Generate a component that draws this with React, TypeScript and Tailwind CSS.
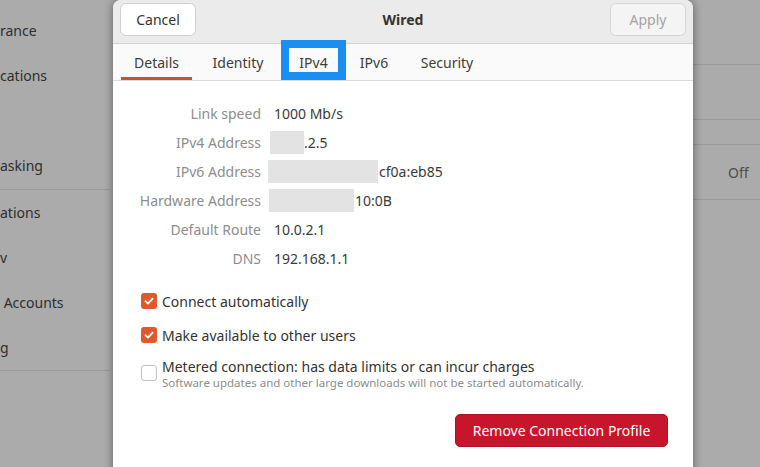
import React from "react";

function Check({ checked }: { checked: boolean }) {
  if (checked) {
    return (
      <div className="w-[16px] h-[16px] rounded-[3px] bg-[#e2582a] flex items-center justify-center shrink-0">
        <svg width="12" height="12" viewBox="0 0 12 12">
          <polyline points="2.5,6.2 5,8.6 9.6,3.6" fill="none" stroke="#ffffff" strokeWidth="1.8" strokeLinecap="round" strokeLinejoin="round" />
        </svg>
      </div>
    );
  }
  return <div className="w-[16px] h-[16px] rounded-[3px] bg-white border border-[#c2c2c2] shrink-0" />;
}

function Row({ label, children }: { label: string; children: React.ReactNode }) {
  return (
    <div className="flex h-[29px] items-center">
      <div className="w-[148px] text-right text-[#8d8d8d]">{label}</div>
      <div className="ml-[13px] flex items-center text-[#3a3a3a]">{children}</div>
    </div>
  );
}

export default function App() {
  const sideTop = ["rance", "cations", "", "asking"];
  const sideBottom = ["ations", "v", "\u00a0Accounts", "g"];
  return (
    <div className="w-[760px] h-[467px] overflow-hidden bg-[#ababab] flex font-['Noto_Sans','Open_Sans',sans-serif] text-[14px]">
      {/* background sidebar */}
      <div className="w-[113px] shrink-0 pt-[8px] text-[#2e2e2e]">
        {sideTop.map((t, i) => (
          <div key={i} className="h-[45px] flex items-center whitespace-nowrap">{t}</div>
        ))}
        <div className="w-[110px] h-px bg-[#9a9a9a] mt-[1px]" />
        {sideBottom.map((t, i) => (
          <div key={i} className="h-[45px] flex items-center whitespace-nowrap">{t}</div>
        ))}
        <div className="w-[110px] h-px bg-[#9a9a9a]" />
      </div>

      {/* dialog */}
      <div className="w-[580px] shrink-0 h-[480px] bg-white rounded-t-[8px] shadow-[0_0_10px_rgba(0,0,0,0.45)] relative z-10 flex flex-col">
        <div className="h-[44px] bg-[#ebebeb] border-b border-[#d2d2d2] rounded-t-[8px] grid grid-cols-[76px_1fr_76px] px-[7px] pt-[3px]">
          <div className="h-[33px] bg-white border border-[#cfcfcf] rounded-[6px] flex items-center justify-center text-[#333]">Cancel</div>
          <div className="h-[33px] flex items-center justify-center font-bold text-[#333]">Wired</div>
          <div className="h-[33px] bg-[#f4f4f4] border border-[#d6d6d6] rounded-[6px] flex items-center justify-center text-[#a3a3a3]">Apply</div>
        </div>

        <div className="h-[37px] bg-[#fafafa] border-b border-[#dcdcdc] flex text-[#3d3d3d]">
          <div className="ml-[8px] w-[71px] relative flex items-center justify-center">
            Details
            <div className="absolute left-0 right-0 bottom-0 h-[3px] bg-[#c6532f]" />
          </div>
          <div className="ml-[11px] w-[70px] flex items-center justify-center">Identity</div>
          <div className="ml-[8px] w-[65px] relative flex items-center justify-center">
            IPv4
            <div className="absolute left-0 right-0 top-[-4px] bottom-0 border-[8px] border-[#1b8ef2]" />
          </div>
          <div className="ml-[-3px] w-[62px] flex items-center justify-center">IPv6</div>
          <div className="ml-[7px] w-[70px] flex items-center justify-center">Security</div>
        </div>

        <div className="pt-[18px] flex flex-col">
          <Row label="Link speed">1000 Mb/s</Row>
          <Row label="IPv4 Address">
            <div className="ml-[-4px] w-[34px] h-[23px] bg-[#e3e3e3]" />
            <span>.2.5</span>
          </Row>
          <Row label="IPv6 Address">
            <div className="ml-[-6px] w-[110px] h-[23px] bg-[#e3e3e3]" />
            <span className="ml-[1px]">cf0a:eb85</span>
          </Row>
          <Row label="Hardware Address">
            <div className="ml-[-5px] w-[85px] h-[23px] bg-[#e3e3e3]" />
            <span className="ml-[1px]">10:0B</span>
          </Row>
          <Row label="Default Route">10.0.2.1</Row>
          <Row label="DNS">192.168.1.1</Row>

          <div className="ml-[28px] mt-[11px] h-[34px] flex items-center gap-[5px] text-[#333]">
            <Check checked={true} />
            <span>Connect automatically</span>
          </div>
          <div className="ml-[28px] h-[34px] flex items-center gap-[5px] text-[#333]">
            <Check checked={true} />
            <span>Make available to other users</span>
          </div>
          <div className="ml-[28px] mt-[6px] flex items-start gap-[5px]">
            <div className="mt-[7px]"><Check checked={false} /></div>
            <div className="flex flex-col pt-[2px]">
              <span className="block leading-[14px] text-[#333]">Metered connection: has data limits or can incur charges</span>
              <span className="block mt-[2px] text-[11.5px] leading-[13px] text-[#8d8d8d]">Software updates and other large downloads will not be started automatically.</span>
            </div>
          </div>

          <div className="mt-[25px] flex justify-end pr-[25px]">
            <div className="w-[213px] h-[33px] rounded-[5px] bg-[#c7162b] border border-[#a8142a] text-white flex items-center justify-center">
              Remove Connection Profile
            </div>
          </div>
        </div>
      </div>

      {/* background right panel */}
      <div className="flex-1 flex flex-col text-[#4d4d4d]">
        <div className="h-[65px] border-b border-[#999999]" />
        <div className="h-[55px] border-b border-[#999999]" />
        <div className="h-[25px] border-b border-[#999999]" />
        <div className="h-[55px] border-b border-[#999999] flex items-center pl-[35px]">Off</div>
      </div>
    </div>
  );
}
